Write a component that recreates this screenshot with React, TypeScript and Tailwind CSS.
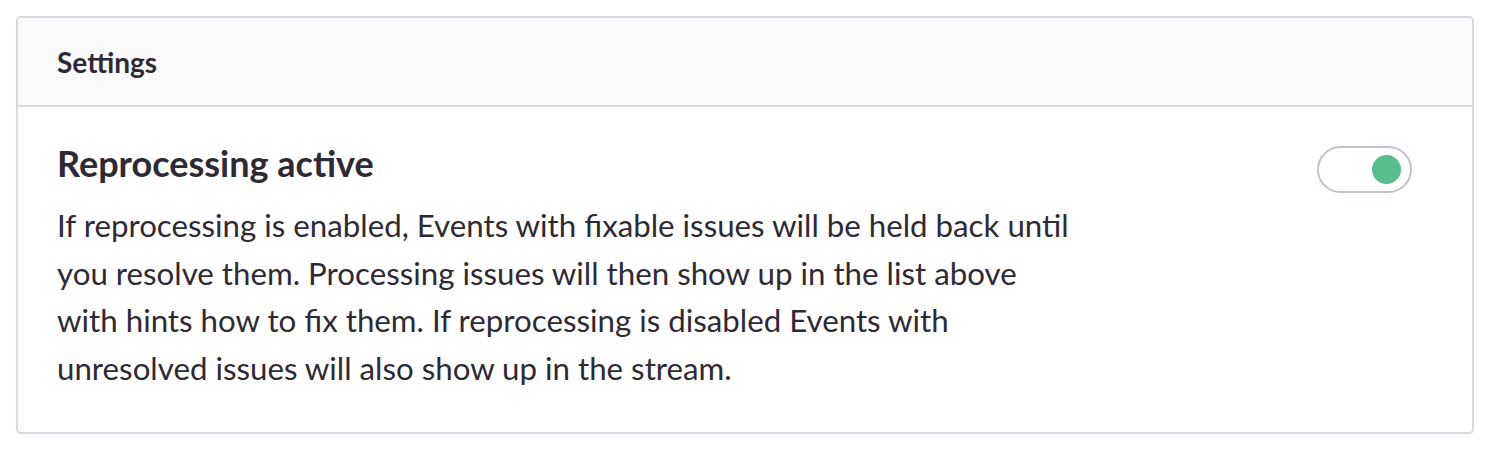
import React from "react";

function Toggle({ on }: { on: boolean }) {
  return (
    <button
      type="button"
      aria-pressed={on}
      className="relative flex h-[47px] w-[95px] shrink-0 items-center rounded-full border-2 border-[#c7bfd0] bg-white px-[9px]"
    >
      <span
        className={
          on
            ? "ml-auto h-[29px] w-[29px] rounded-full bg-[#57be8c]"
            : "h-[29px] w-[29px] rounded-full bg-[#c7bfd0]"
        }
      />
    </button>
  );
}

export default function App() {
  return (
    <div className="min-h-[455px] bg-white p-4 font-['Lato',sans-serif] text-[#2f2936]">
      <div className="overflow-hidden rounded-[5px] border-2 border-[#dcd8e2] shadow-[0_1px_2px_rgba(0,0,0,0.04)]">
        <div className="flex h-[89px] items-center border-b-2 border-[#dcd8e2] bg-[#fbfbfc] px-[39px]">
          <h2 className="text-[28px] font-bold">Settings</h2>
        </div>
        <div className="flex items-start justify-between pb-[40px] pl-[39px] pr-[60px] pt-[34px]">
          <div className="w-[1040px]">
            <h3 className="text-[36px] font-bold leading-[44px]">Reprocessing active</h3>
            <p className="mt-[17px] text-[31.25px] leading-[47.5px] text-[#2f2936]">
              If reprocessing is enabled, Events with fixable issues will be held back until
              <br />
              you resolve them. Processing issues will then show up in the list above
              <br />
              with hints how to fix them. If reprocessing is disabled Events with
              <br />
              unresolved issues will also show up in the stream.
            </p>
          </div>
          <div className="mt-[5px]">
            <Toggle on />
          </div>
        </div>
      </div>
    </div>
  );
}
